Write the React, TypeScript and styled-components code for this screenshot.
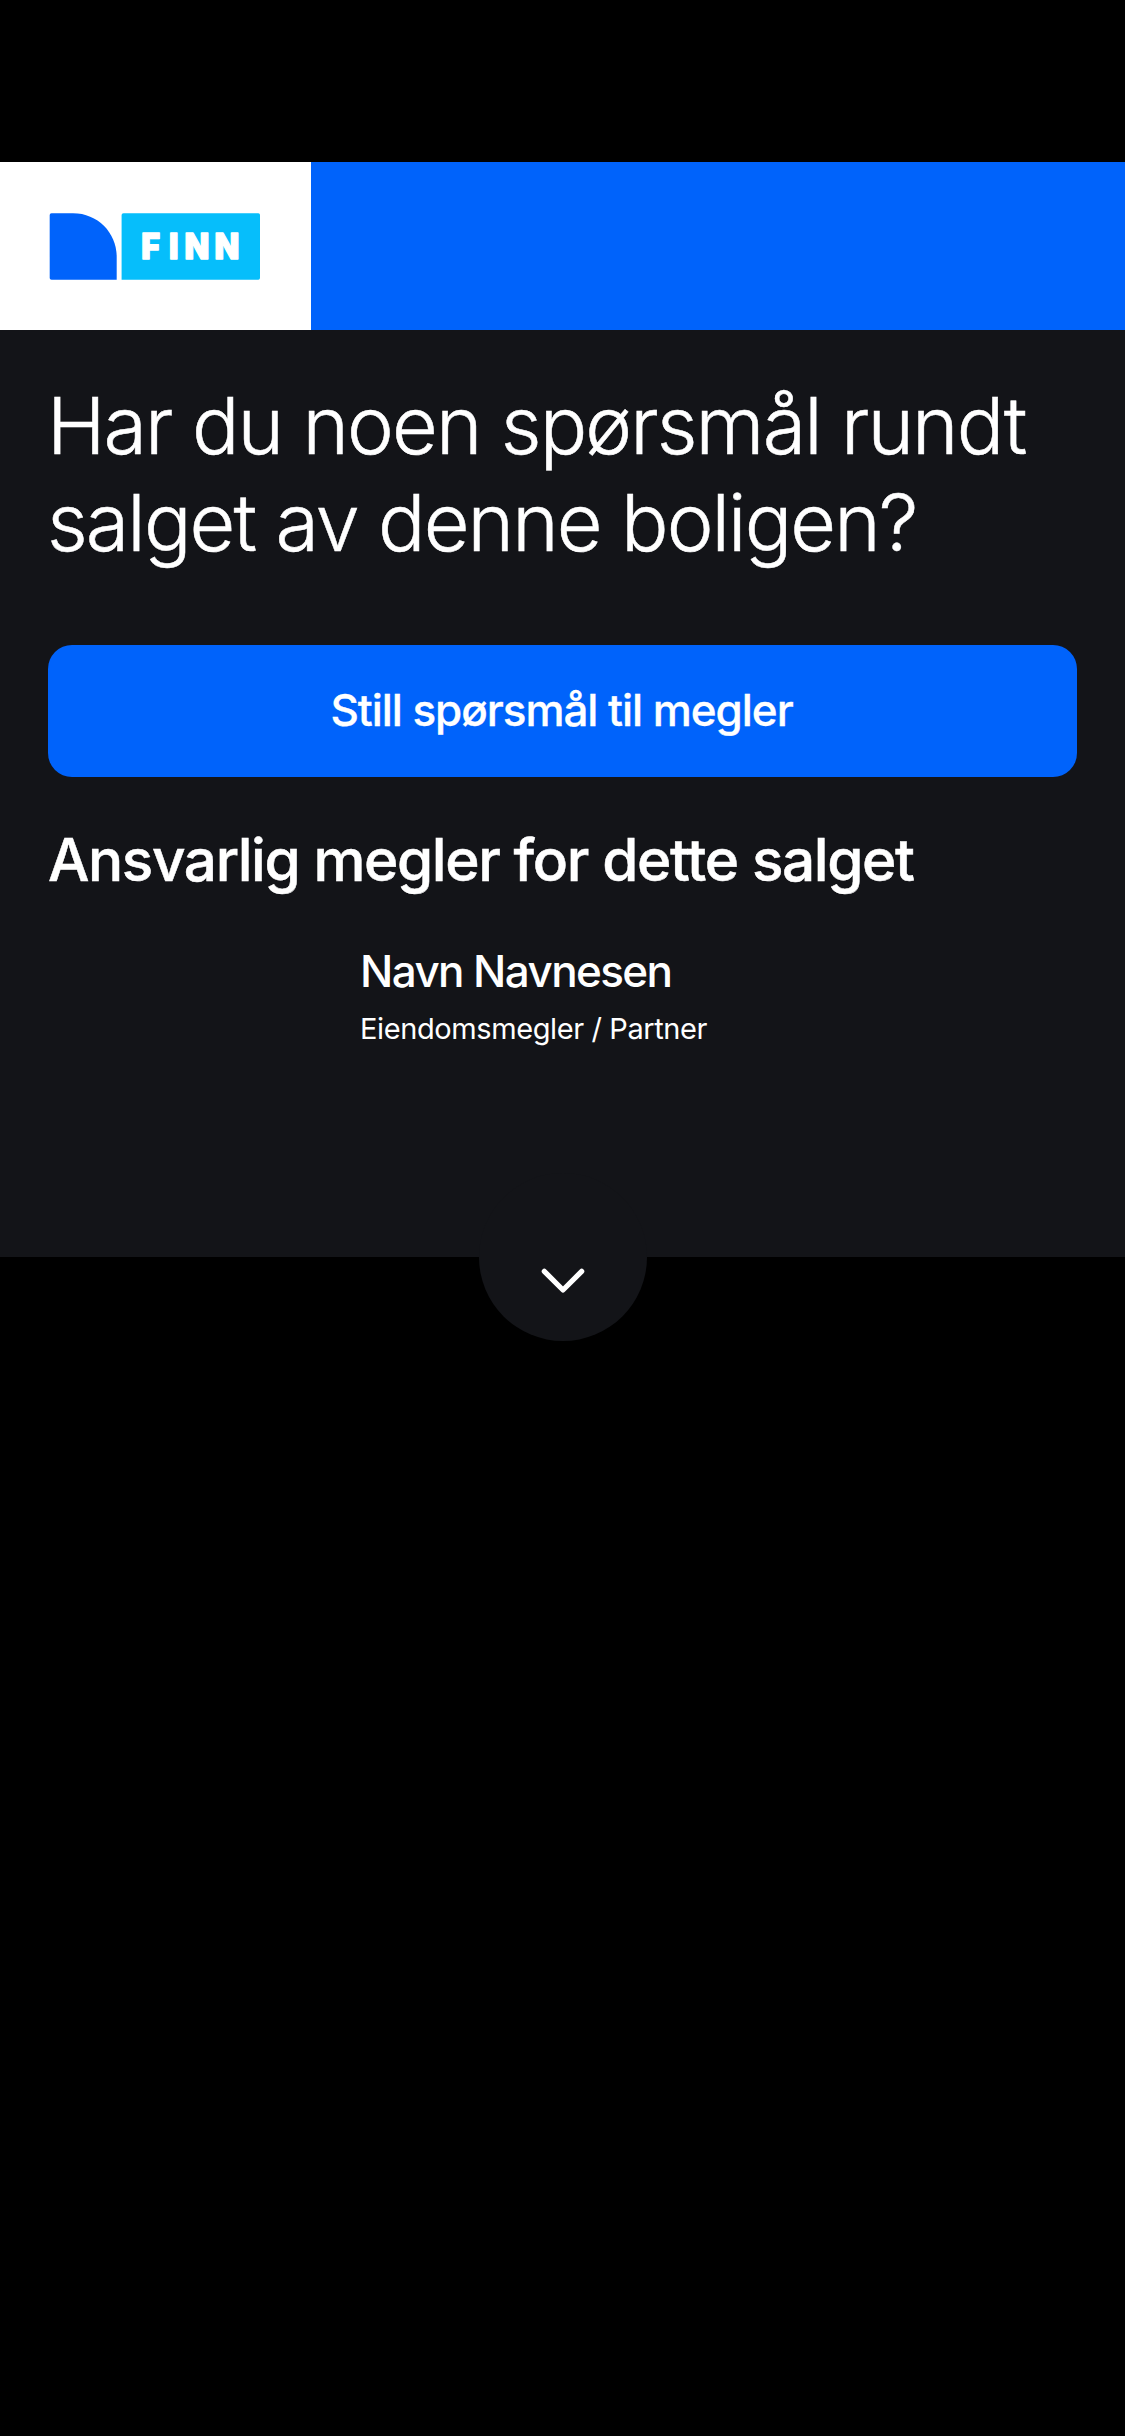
import React from "react";
import styled, { createGlobalStyle } from "styled-components";

const GlobalStyle = createGlobalStyle`
  *, *::before, *::after { box-sizing: border-box; }
  body { margin: 0; background: #000; font-family: Inter, "Liberation Sans", sans-serif; }
`;

const Screen = styled.div`
  display: flex;
  flex-direction: column;
  min-height: 2436px;
  padding-top: 162px;
  background: #000;
  color: #fff;
`;

const Header = styled.header`
  display: flex;
  height: 168px;
  background: #0063fb;
`;

const LogoTile = styled.div`
  width: 311px;
  padding: 51px 0 0 49px;
  background: #fff;
`;

const Panel = styled.main`
  position: relative;
  height: 927px;
  padding: 47px 48px 0;
  background: #131418;
`;

const Title = styled.h1`
  margin: 0 0 0 -1px;
  font-size: 79px;
  line-height: 97px;
  font-weight: 300;
  letter-spacing: -1.9px;
  white-space: nowrap;
  -webkit-text-stroke: 0.5px #fff;
`;

const AskButton = styled.button`
  display: flex;
  align-items: center;
  justify-content: center;
  width: 100%;
  height: 132px;
  margin-top: 74px;
  padding: 0 2px 2px 0;
  border: 0;
  border-radius: 24px;
  background: #0063fb;
  color: #fff;
  font: 500 44px/60px Inter, "Liberation Sans", sans-serif;
  letter-spacing: -1.05px;
  -webkit-text-stroke: 0.3px #fff;
`;

const SectionTitle = styled.h2`
  margin: 48px 0 0;
  font-size: 58.5px;
  line-height: 70px;
  font-weight: 500;
  letter-spacing: -1.4px;
  white-space: nowrap;
  -webkit-text-stroke: 0.5px #fff;
`;

const Agent = styled.section`
  display: flex;
  flex-direction: column;
  margin: 46px 0 0 312px;
`;

const AgentName = styled.span`
  font-size: 44px;
  line-height: 60px;
  font-weight: 500;
  letter-spacing: -1.6px;
`;

const AgentRole = styled.span`
  margin-top: 6px;
  font-size: 29px;
  line-height: 44px;
  letter-spacing: -0.4px;
`;

const Expander = styled.button`
  position: absolute;
  left: 479px;
  bottom: -84px;
  display: flex;
  align-items: center;
  justify-content: center;
  width: 168px;
  height: 168px;
  padding: 48px 0 0;
  border: 0;
  border-radius: 50%;
  background: #131418;
`;

const Logo = () => (
  <svg width="212" height="67" viewBox="0 0 212 67" display="block" role="img">
    <path d="M2.5 .2H24C49 .2 67.7 20 67.7 44V66.8H2.5Q.7 66.8 .7 65V2Q.7 .2 2.5 .2Z" fill="#0063fb" />
    <path d="M74.5 .2H209.3Q211 .2 211 2V65Q211 66.8 209.3 66.8H72.6V2Q72.6 .2 74.5 .2Z" fill="#06befb" />
    <text
      x="100.4 130.4 147.4 180"
      y="46.4"
      transform="scale(.92 1)"
      fill="#fff"
      stroke="#fff"
      strokeWidth="1.3"
      strokeLinejoin="round"
      fontFamily="Inter"
      fontWeight="900"
      fontSize="35"
    >
      FINN
    </text>
  </svg>
);

const Chevron = () => (
  <svg width="44" height="26" viewBox="0 0 44 26" fill="none" stroke="#fff">
    <path d="M3.3 3.3 22 22 40.7 3.3" strokeWidth="5.2" strokeLinecap="round" strokeLinejoin="round" />
  </svg>
);

export default function App() {
  return (
    <>
      <GlobalStyle />
      <Screen>
        <Header>
          <LogoTile>
            <Logo />
          </LogoTile>
        </Header>
        <Panel>
          <Title>
            Har du noen spørsmål rundt
            <br />
            salget av denne boligen?
          </Title>
          <AskButton>Still spørsmål til megler</AskButton>
          <SectionTitle>Ansvarlig megler for dette salget</SectionTitle>
          <Agent>
            <AgentName>Navn Navnesen</AgentName>
            <AgentRole>Eiendomsmegler / Partner</AgentRole>
          </Agent>
          <Expander>
            <Chevron />
          </Expander>
        </Panel>
      </Screen>
    </>
  );
}
